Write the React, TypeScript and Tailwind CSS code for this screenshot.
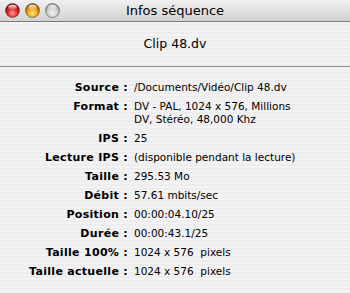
import React from "react";

const rows: { label: string; value: string[] }[] = [
  { label: "Source :", value: ["/Documents/Vidéo/Clip 48.dv"] },
  { label: "Format :", value: ["DV - PAL, 1024 x 576, Millions", "DV, Stéréo, 48,000 Khz"] },
  { label: "IPS :", value: ["25"] },
  { label: "Lecture IPS :", value: ["(disponible pendant la lecture)"] },
  { label: "Taille :", value: ["295.53 Mo"] },
  { label: "Débit :", value: ["57.61 mbits/sec"] },
  { label: "Position :", value: ["00:00:04.10/25"] },
  { label: "Durée :", value: ["00:00:43.1/25"] },
  { label: "Taille 100% :", value: ["1024 x 576  pixels"] },
  { label: "Taille actuelle :", value: ["1024 x 576  pixels"] },
];

function Light({ id, c1, c2, c3 }: { id: string; c1: string; c2: string; c3: string }) {
  return (
    <svg width="15" height="15" viewBox="0 0 14 14">
      <defs>
        <radialGradient id={id} cx="50%" cy="70%" r="60%">
          <stop offset="0%" stopColor={c1} />
          <stop offset="60%" stopColor={c2} />
          <stop offset="100%" stopColor={c3} />
        </radialGradient>
        <linearGradient id={id + "h"} x1="0" y1="0" x2="0" y2="1">
          <stop offset="0%" stopColor="#fff" stopOpacity="0.9" />
          <stop offset="100%" stopColor="#fff" stopOpacity="0" />
        </linearGradient>
      </defs>
      <circle cx="7" cy="7" r="6.5" fill={`url(#${id})`} stroke="rgba(0,0,0,0.45)" strokeWidth="0.8" />
      <ellipse cx="7" cy="4.2" rx="4" ry="2.6" fill={`url(#${id}h)`} />
    </svg>
  );
}

export default function App() {
  return (
    <div
      className="w-[350px] h-[293px] overflow-hidden flex flex-col bg-[repeating-linear-gradient(180deg,#ededed_0px,#ededed_2px,#f3f3f3_2px,#f3f3f3_4px)]"
      style={{ fontFamily: '"DejaVu Sans", sans-serif' }}
    >
      {/* title bar */}
      <div className="relative h-[22px] flex items-center justify-center border-b border-[#7a7a7a] bg-[linear-gradient(180deg,#f0f0f0,#d2d2d2)]">
        <div className="absolute left-[5px] top-[3px] flex gap-[5px]">
          <Light id="r" c1="#ff9a8e" c2="#d8262a" c3="#8c0c0c" />
          <Light id="y" c1="#ffe58a" c2="#f2a00c" c3="#a35a00" />
          <Light id="g" c1="#f2f2f2" c2="#d0d0d0" c3="#9a9a9a" />
        </div>
        <span className="text-[13px] text-black">Infos séquence</span>
      </div>

      <div className="h-[45px] flex items-center justify-center border-b border-[#8c8c8c]">
        <span className="text-[12.5px] text-black">Clip 48.dv</span>
      </div>

      <div className="pt-[14px] grid grid-cols-[128px_1fr] gap-x-[6px] text-[10.5px] text-black">
        {rows.map((r) => (
          <React.Fragment key={r.label}>
            <div className="text-right font-bold text-[11px] tracking-[0.3px] leading-[13px] pb-[6px]">{r.label}</div>
            <div className="leading-[13px] pb-[6px] whitespace-pre">
              {r.value.map((v) => (
                <div key={v}>{v}</div>
              ))}
            </div>
          </React.Fragment>
        ))}
      </div>
    </div>
  );
}
